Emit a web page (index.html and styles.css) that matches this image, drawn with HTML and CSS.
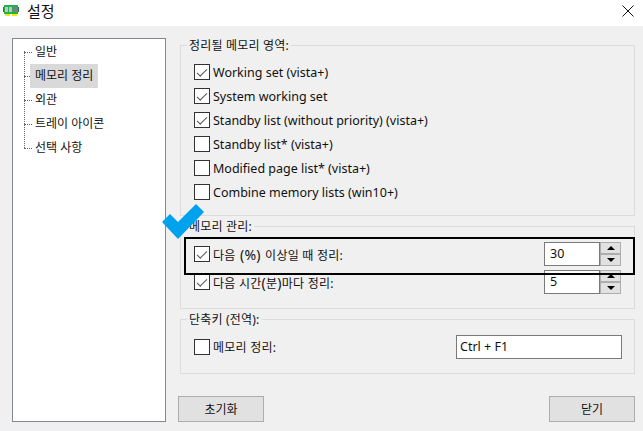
FILE: index.html
```html
<!DOCTYPE html>
<html lang="ko">
<head>
    <meta charset="UTF-8">
    <title>설정</title>
    <link rel="stylesheet" href="styles.css">
</head>
<body>
    <div class="titlebar">
        <svg class="appicon" width="16" height="16" viewBox="0 0 16 16">
            <rect x="2" y="11" width="5" height="2" fill="#f4e800"/>
            <rect x="9" y="11" width="5" height="2" fill="#f4e800"/>
            <rect x="1" y="2" width="14" height="9" fill="#22b14c"/>
            <rect x="0" y="4" width="1" height="5" fill="#1a7a36"/>
            <rect x="15" y="4" width="1" height="5" fill="#1a7a36"/>
            <rect x="2" y="4" width="3" height="5" fill="#c3c3c3"/>
            <rect x="6" y="4" width="3" height="5" fill="#c3c3c3"/>
            <rect x="11" y="4" width="3" height="5" fill="#7f7f7f"/>
        </svg>
        <span class="title">설정</span>
        <svg class="closeicon" width="12" height="12" viewBox="0 0 12 12">
            <path d="M0.5 0.5L11.5 11.5M11.5 0.5L0.5 11.5" stroke="#111" fill="none"/>
        </svg>
    </div>
    <div class="main">
        <div class="tree">
            <div class="treeline"></div>
            <div class="treeitem"><span class="treelabel">일반</span></div>
            <div class="treeitem"><span class="treelabel selected">메모리 정리</span></div>
            <div class="treeitem"><span class="treelabel">외관</span></div>
            <div class="treeitem"><span class="treelabel">트레이 아이콘</span></div>
            <div class="treeitem"><span class="treelabel">선택 사항</span></div>
        </div>
        <div class="content">
            <div class="group group1">
                <div class="legend">정리될 메모리 영역:</div>
                <div class="row latin"><span class="check on"></span>Working set (vista+)</div>
                <div class="row latin"><span class="check on"></span>System working set</div>
                <div class="row latin"><span class="check on"></span>Standby list (without priority) (vista+)</div>
                <div class="row latin"><span class="check"></span>Standby list* (vista+)</div>
                <div class="row latin"><span class="check"></span>Modified page list* (vista+)</div>
                <div class="row latin"><span class="check"></span>Combine memory lists (win10+)</div>
            </div>
            <div class="group group2">
                <div class="legend">메모리 관리:</div>
                <div class="row between">
                    <div class="rowleft"><span class="check on"></span><span>다음 <span class="percent">(%)</span> 이상일 때 정리:</span></div>
                    <div class="spin">
                        <div class="spinval latin">30</div>
                        <div class="spinbtns"><div class="spinbtn"><i class="up"></i></div><div class="spinbtn"><i class="down"></i></div></div>
                    </div>
                </div>
                <div class="row between">
                    <div class="rowleft"><span class="check on"></span><span>다음 시간<span class="paren">(</span>분<span class="paren">)</span>마다 정리:</span></div>
                    <div class="spin">
                        <div class="spinval latin">5</div>
                        <div class="spinbtns"><div class="spinbtn"><i class="up"></i></div><div class="spinbtn"><i class="down"></i></div></div>
                    </div>
                </div>
            </div>
            <div class="group group3">
                <div class="legend">단축키 (전역):</div>
                <div class="row between">
                    <div class="rowleft"><span class="check"></span>메모리 정리:</div>
                    <div class="hotkey latin">Ctrl + F1</div>
                </div>
            </div>
            <div class="buttons">
                <button type="button" class="btn">초기화</button>
                <button type="button" class="btn">닫기</button>
            </div>
        </div>
    </div>
    <!-- annotation drawn on top of the screenshot -->
    <div class="markbox"></div>
    <svg class="bluecheck" width="42" height="36" viewBox="0 0 42 36">
        <path d="M0 18L8 10L16 18L34 0L42 8L16 35Z" fill="#00a2ed"/>
    </svg>
</body>
</html>
```

FILE: styles.css
```css
html, body {
    margin: 0;
    padding: 0;
}

body {
    width: 643px;
    height: 431px;
    overflow: hidden;
    position: relative;
    background-color: #f0f0f0;
    font-family: "Noto Sans", "Noto Sans CJK KR", sans-serif;
    font-size: 12px;
    color: #111;
}

.titlebar {
    box-sizing: border-box;
    height: 26px;
    background-color: #fff;
    display: flex;
    align-items: center;
    padding: 0 9px 5px 3px;
}

.appicon {
    margin-right: 8px;
}

.title {
    font-size: 15px;
    line-height: 20px;
    flex: 1;
}

.main {
    display: flex;
    padding: 12px 8px 0 12px;
    gap: 14px;
}

.tree {
    position: relative;
    box-sizing: border-box;
    width: 154px;
    height: 384px;
    background-color: #fff;
    border: 1px solid #828790;
    padding-top: 1px;
}

.treeline {
    position: absolute;
    left: 11px;
    top: 12px;
    width: 0;
    height: 97px;
    border-left: 1px dotted #666;
}

.treeitem {
    height: 24px;
    display: flex;
    align-items: center;
    padding-left: 17px;
    position: relative;
}

.treeitem::before {
    content: "";
    position: absolute;
    left: 11px;
    top: 12px;
    width: 8px;
    border-top: 1px dotted #666;
}

.treelabel {
    padding: 0 5px;
    line-height: 24px;
    position: relative;
}

.selected {
    background-color: #d9d9d9;
}

.content {
    flex: 1;
    padding-top: 7px;
}

.latin {
    font-size: 12.5px;
}

.percent {
    font-size: 14px;
    margin: 0 1px;
}

.paren {
    font-size: 14px;
}

.group {
    position: relative;
    box-sizing: border-box;
    border: 1px solid #dcdcdc;
    padding: 14px 12px 0 13px;
    margin-bottom: 10px;
}

.group1 {
    height: 171px;
}

.group2 {
    height: 83px;
    padding-top: 15px;
}

.group3 {
    height: 55px;
    padding-top: 15px;
}

.legend {
    position: absolute;
    left: 6px;
    top: -9px;
    padding: 0 2px;
    line-height: 18px;
    letter-spacing: 0.2px;
    background-color: #f0f0f0;
}

.row {
    height: 24px;
    display: flex;
    align-items: center;
}

.between {
    justify-content: space-between;
}

.group2 .row + .row {
    margin-top: 4px;
}

.rowleft {
    display: flex;
    align-items: center;
    letter-spacing: 0.25px;
}

.check {
    box-sizing: border-box;
    width: 16px;
    height: 16px;
    margin-right: 3px;
    background-color: #fff;
    border: 1px solid #333;
    position: relative;
}

.check.on::after {
    content: "";
    position: absolute;
    left: 2px;
    top: 1px;
    width: 9px;
    height: 4px;
    border-left: 1px solid #555;
    border-bottom: 1px solid #555;
    transform: translate(0, 3px) rotate(-45deg);
}

.spin {
    display: flex;
    margin-right: 1px;
}

.spinval {
    box-sizing: border-box;
    width: 56px;
    height: 24px;
    line-height: 22px;
    padding-left: 5px;
    background-color: #fff;
    border: 1px solid #7a7a7a;
}

.spinbtns {
    width: 21px;
    height: 24px;
    display: flex;
    flex-direction: column;
}

.spinbtn {
    flex: 1;
    box-sizing: border-box;
    border: 1px solid #adadad;
    background-color: #e1e1e1;
    display: flex;
    align-items: center;
    justify-content: center;
}

.spinbtn i {
    width: 0;
    height: 0;
    border-left: 4px solid transparent;
    border-right: 4px solid transparent;
}

.spinbtn i.up {
    border-bottom: 4px solid #000;
}

.spinbtn i.down {
    border-top: 4px solid #000;
}

.hotkey {
    box-sizing: border-box;
    width: 166px;
    height: 24px;
    line-height: 22px;
    padding-left: 3px;
    background-color: #fff;
    border: 1px solid #7a7a7a;
}

.buttons {
    display: flex;
    justify-content: space-between;
    padding-top: 12px;
    margin-left: -2px;
}

.btn {
    width: 86px;
    height: 26px;
    padding: 0;
    background-color: #e1e1e1;
    border: 1px solid #adadad;
    font-family: inherit;
    font-size: 12px;
    color: #111;
}

.markbox {
    position: absolute;
    left: 184px;
    top: 237px;
    width: 451px;
    height: 38px;
    box-sizing: border-box;
    border: 2px solid #000;
}

.bluecheck {
    position: absolute;
    left: 162px;
    top: 204px;
}
```
